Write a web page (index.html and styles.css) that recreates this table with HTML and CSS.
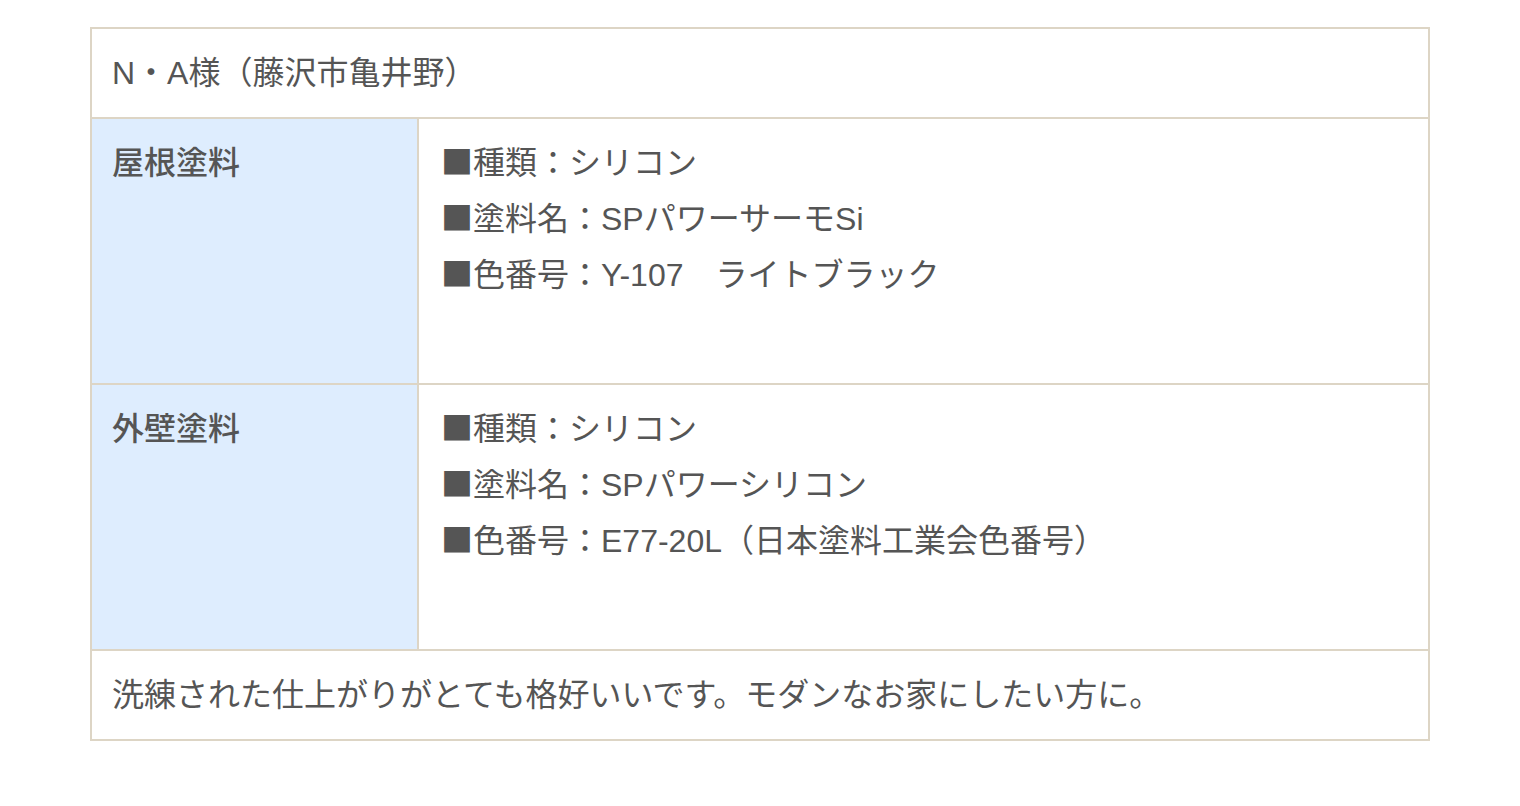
FILE: index.html
```html
<!DOCTYPE html>
<html lang="ja">
<head>
<meta charset="utf-8">
<title>施工事例</title>
<link rel="stylesheet" href="styles.css">
</head>
<body>
<div class="wrap">
  <table class="spec">
    <colgroup>
      <col class="col-label">
      <col class="col-detail">
    </colgroup>
    <tr>
      <td class="full" colspan="2">N・A様（藤沢市亀井野）</td>
    </tr>
    <tr>
      <th class="label">屋根塗料</th>
      <td class="detail"><span class="sq">■</span>種類：シリコン<br><span class="sq">■</span>塗料名：SPパワーサーモSi<br><span class="sq">■</span>色番号：Y-107　ライトブラック</td>
    </tr>
    <tr>
      <th class="label">外壁塗料</th>
      <td class="detail"><span class="sq">■</span>種類：シリコン<br><span class="sq">■</span>塗料名：SPパワーシリコン<br><span class="sq">■</span>色番号：E77-20L（日本塗料工業会色番号）</td>
    </tr>
    <tr>
      <td class="full" colspan="2">洗練された仕上がりがとても格好いいです。モダンなお家にしたい方に。</td>
    </tr>
  </table>
</div>
</body>
</html>
```

FILE: styles.css
```css
html, body {
  margin: 0;
  padding: 0;
  background: #ffffff;
}

.wrap {
  padding: 27px 0 0 90px;
}

.spec {
  width: 1340px;
  border-collapse: collapse;
  table-layout: fixed;
  font-family: "Liberation Sans", "Noto Sans CJK JP", sans-serif;
  font-size: 32px;
  line-height: 56px;
  color: #555555;
}

.col-label {
  width: 327px;
}

.spec td,
.spec th {
  border: 2px solid #ddd5c5;
  vertical-align: top;
  text-align: left;
  padding: 16px 20px;
}

.spec .full {
  height: 56px;
}

.spec .label {
  background: #deedfe;
  font-weight: 500;
  padding-bottom: 192px;
}

.spec .detail {
  background: #ffffff;
  font-weight: normal;
  padding-left: 22px;
  padding-bottom: 80px;
}

.sq {
  font-family: "Noto Sans CJK JP", sans-serif;
  line-height: 1;
  color: #555555;
}
```
